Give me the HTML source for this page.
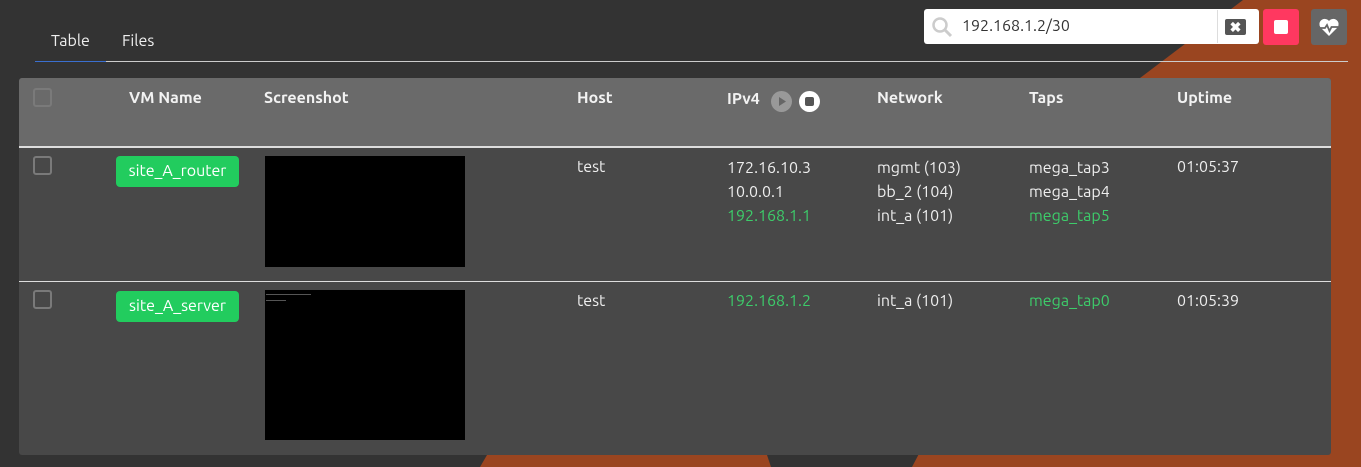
<!DOCTYPE html>
<html><head><meta charset="utf-8"><style>
*{margin:0;padding:0;box-sizing:border-box}
body{width:1361px;height:467px;background:#333;font-family:"Ubuntu","Liberation Sans",sans-serif;color:#eee;position:relative;overflow:hidden;font-size:16px}
.a{position:absolute}
.t{position:absolute;white-space:nowrap}
.h{font-weight:bold;color:#f2f2f2}
.g{color:#3dcc6a}
.cb{position:absolute;width:19px;height:19px;border:2px solid #7a7a7a;border-radius:3px}
</style></head><body>
<svg class="a" style="left:0;top:0" width="1361" height="467">
<polygon points="1243,0 1361,0 1361,467 912,467 1000,300 1140,78" fill="#9a4520"/>
<polygon points="487,455 767,455 771,467 480,467" fill="#9a4520"/>
</svg>
<div class="t" style="left:51px;top:32px;font-size:16px">Table</div>
<div class="t" style="left:122px;top:32px;font-size:16px">Files</div>
<div class="a" style="left:35px;top:61px;width:1313px;height:1px;background:#ccc"></div>
<div class="a" style="left:35px;top:61px;width:71px;height:1px;background:#3a6fd0"></div>

<div class="a" style="left:924px;top:9px;width:335px;height:35px;background:#fff;border-radius:3px"></div>
<svg class="a" style="left:931px;top:16px" width="22" height="22"><circle cx="9" cy="9" r="6.5" fill="none" stroke="#ccc" stroke-width="2.5"/><line x1="14" y1="14" x2="20" y2="20" stroke="#ccc" stroke-width="3"/></svg>
<div class="t" style="left:962px;top:17px;color:#333;font-size:16px">192.168.1.2/30</div>
<div class="a" style="left:1217px;top:10px;width:1px;height:33px;background:#ddd"></div>
<div class="a" style="left:1225px;top:19px;width:21px;height:16px;background:#555;border-radius:2px;color:#fff;font-size:14px;font-weight:bold;text-align:center;line-height:16px">✖</div>
<div class="a" style="left:1263px;top:9px;width:36px;height:36px;background:#ff3860;border-radius:3px"></div>
<div class="a" style="left:1274px;top:20px;width:14px;height:14px;background:#fff;border-radius:2px"></div>
<div class="a" style="left:1311px;top:9px;width:36px;height:36px;background:#666;border-radius:3px"></div>
<svg class="a" style="left:1317px;top:15px" width="24" height="24" viewBox="0 0 24 24"><path d="M12 21 L3.5 12.5 A5 5 0 0 1 12 6 A5 5 0 0 1 20.5 12.5 Z" fill="#fff"/><path d="M3 13 H8 L10 10 L12.5 16 L14.5 12 H21" fill="none" stroke="#666" stroke-width="1.8"/></svg>

<div class="a" style="left:19px;top:78px;width:1312px;height:377px;background:#484848;border-radius:3px;overflow:hidden">
<div class="a" style="left:0;top:0;width:1312px;height:68px;background:#6a6a6a"></div>
<div class="a" style="left:0;top:68px;width:1312px;height:2px;background:#ddd"></div>
<div class="a" style="left:0;top:203px;width:1312px;height:1px;background:#ddd"></div>
</div>
<div class="cb" style="left:33px;top:88px"></div>
<div class="t h" style="left:129px;top:89px">VM Name</div>
<div class="t h" style="left:264px;top:89px">Screenshot</div>
<div class="t h" style="left:577px;top:89px">Host</div>
<div class="t h" style="left:727px;top:90px">IPv4</div>
<div class="a" style="left:771px;top:91px;width:21px;height:21px;border-radius:50%;background:#999"></div>
<svg class="a" style="left:771px;top:91px" width="21" height="21"><polygon points="8,6 15,10.5 8,15" fill="#666"/></svg>
<div class="a" style="left:799px;top:91px;width:21px;height:21px;border-radius:50%;background:#fff"></div>
<div class="a" style="left:805px;top:97px;width:9px;height:9px;border-radius:2px;background:#555"></div>
<div class="t h" style="left:877px;top:89px">Network</div>
<div class="t h" style="left:1029px;top:89px">Taps</div>
<div class="t h" style="left:1177px;top:89px">Uptime</div>

<div class="cb" style="left:33px;top:156px"></div>
<div class="a" style="left:116px;top:156px;width:123px;height:31px;background:#22cc5e;border-radius:4px;color:#fff;text-align:center;line-height:31px;font-size:16px">site_A_router</div>
<div class="a" style="left:265px;top:156px;width:200px;height:111px;background:#000"></div>
<div class="t" style="left:577px;top:158px">test</div>
<div class="t" style="left:727px;top:156px;line-height:24px">172.16.10.3<br>10.0.0.1<br><span class="g">192.168.1.1</span></div>
<div class="t" style="left:877px;top:156px;line-height:24px">mgmt (103)<br>bb_2 (104)<br>int_a (101)</div>
<div class="t" style="left:1029px;top:156px;line-height:24px">mega_tap3<br>mega_tap4<br><span class="g">mega_tap5</span></div>
<div class="t" style="left:1177px;top:158px">01:05:37</div>

<div class="cb" style="left:33px;top:290px"></div>
<div class="a" style="left:116px;top:291px;width:123px;height:31px;background:#22cc5e;border-radius:4px;color:#fff;text-align:center;line-height:31px;font-size:16px">site_A_server</div>
<div class="a" style="left:265px;top:290px;width:200px;height:150px;background:#000"></div>
<div class="a" style="left:266px;top:294px;width:45px;height:1px;background:#555"></div>
<div class="a" style="left:266px;top:300px;width:20px;height:1px;background:#555"></div>
<div class="t" style="left:577px;top:292px">test</div>
<div class="t g" style="left:727px;top:292px">192.168.1.2</div>
<div class="t" style="left:877px;top:292px">int_a (101)</div>
<div class="t g" style="left:1029px;top:292px">mega_tap0</div>
<div class="t" style="left:1177px;top:292px">01:05:39</div>
</body></html>
